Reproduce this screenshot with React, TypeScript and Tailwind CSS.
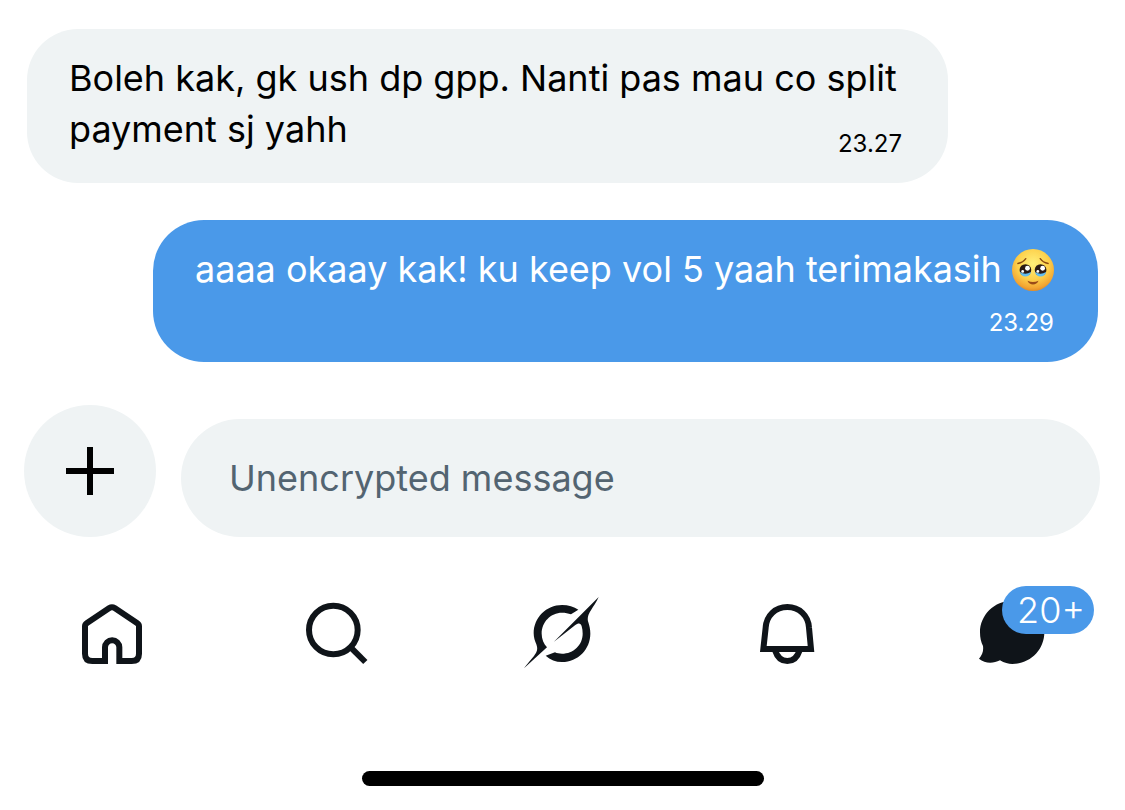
import type { ReactNode } from 'react'


type NavItem = {
  label: string,
  viewBox: string,
  icon: ReactNode,
  badge?: string
}


const navItems: NavItem[] = [
  {
    label: 'Home',
    viewBox: '45 33 225 225',
    icon: <path
      d="M135 228H97Q75 228 75 206V124Q75 118 81 114L148 69Q156 64 164 69L231 114Q237 118 237 124V206Q237 228 215 228H178V187a21.500 21.500 0 0 0-43 0Z"
      fill="none" stroke="currentColor" strokeWidth="18" />
  },
  {
    label: 'Search',
    viewBox: '30 33 225 225',
    icon: <g fill="none" stroke="currentColor" strokeWidth="18">
      <circle cx="130" cy="135" r="73" />
      <path d="M182 187L226 231" />
    </g>
  },
  {
    label: 'Grok',
    viewBox: '45 33 225 225',
    icon: <g fill="currentColor">
      <path d="M205 74C192 65 175 60 156 60C109 60 71 98 71 145C71 158 75 168 79 178C84 192 82 200 72 213C64 223 50 238 42 250L111 187C101 177 95 161 95 146C95 111 122 83 156 83C166 83 175 85 183 88Z" />
      <path d="M107 212C121 225 137 231 156 231C204 231 241 192 241 146C241 133 238 122 235 112C231 98 235 88 242 77C250 64 260 50 266 36L131 171L195 121C205 113 212 113 215 124C217 131 218 138 218 146C218 180 190 206 156 206C148 206 141 205 135 202Z" />
    </g>
  },
  {
    label: 'Notifications',
    viewBox: '30 33 225 225',
    icon: <g fill="none" stroke="currentColor" strokeWidth="18">
      <path d="M70 192L77 128C79 92 106 66 142 66C178 66 205 92 207 128L213 192Z" />
      <path d="M106 198C112 217 125 228 142 228C159 228 172 217 178 198" />
    </g>
  },
  {
    label: 'Messages',
    viewBox: '30 63 225 225',
    badge: '20+',
    icon: <path
      d="M142 77C88 77 45 120 45 172C45 190 48 201 54 213C56 229 52 239 42 251C60 266 84 266 105 256C118 264 130 267 142 267C196 267 238 225 238 172C238 120 196 77 142 77Z"
      fill="currentColor" />
  }
];


function TearyFace() {
  return <svg viewBox="82 42 122 122" role="img" aria-label="face holding back tears"
    className="inline-block size-[42px] align-[-9px]">
    <defs>
      <radialGradient id="face" cx="0.5" cy="0.35" r="0.68">
        <stop offset="0" stopColor="#fff07a" />
        <stop offset="0.55" stopColor="#fdd04b" />
        <stop offset="0.85" stopColor="#f3a532" />
        <stop offset="1" stopColor="#d98224" />
      </radialGradient>
    </defs>
    <circle cx="143" cy="103" r="61" fill="url(#face)" />
    <g fill="none" stroke="#8a4a12" strokeWidth="4" strokeLinecap="round">
      <path d="M99 84Q115 81 122 70" />
      <path d="M187 84Q171 81 164 70" />
    </g>
    <g fill="#2a1a14">
      <circle cx="121" cy="103" r="17" />
      <circle cx="165" cy="103" r="17" />
    </g>
    <g fill="#62bdf0">
      <path d="M105 109Q121 119 137 109Q134 122 121 122Q108 122 105 109Z" />
      <path d="M149 109Q165 119 181 109Q178 122 165 122Q152 122 149 109Z" />
    </g>
    <g fill="#fff">
      <circle cx="127" cy="98" r="7" />
      <circle cx="171" cy="98" r="7" />
      <circle cx="113" cy="107" r="4" />
      <circle cx="157" cy="107" r="4" />
    </g>
    <path d="M127 134Q143 142 159 134Q154 145 143 145Q132 145 127 134Z" fill="#9a4a18" />
  </svg>
}


function App() {

  return <main className="pt-[29px] pb-6 bg-white text-black text-[36px] leading-[51px] font-['Inter',sans-serif]">

    {/* messages */}

    <section className="flex flex-col gap-[37px] px-[27px]">
      <article className="self-start flow-root w-[86%] rounded-[51px] bg-[#eff3f4] pt-6 pb-[27px] pl-[42px] pr-[46px]">
        Boleh kak, gk ush dp gpp. Nanti pas mau co split payment sj yahh
        <time className="float-right mt-7 text-2xl leading-6">23.27</time>
      </article>

      <article className="self-end flex flex-col rounded-[51px] bg-[#4a99e9] text-white pt-6 pb-[27px] pl-[42px] pr-11">
        <p>aaaa okaay kak! ku keep vol 5 yaah terimakasih <TearyFace /></p>
        <time className="self-end mt-4 text-2xl leading-6">23.29</time>
      </article>
    </section>


    {/* composer */}

    <form className="flex items-end gap-[25px] mt-[43px] pl-6 pr-[25px]">
      <button type="button" aria-label="Add attachment"
        className="flex items-center justify-center size-[132px] shrink-0 rounded-full bg-[#eff3f4]">
        <svg viewBox="0 0 48 48" className="size-12">
          <path d="M24 0V48M0 24H48" stroke="currentColor" strokeWidth="6" />
        </svg>
      </button>
      <input type="text" aria-label="Message" placeholder="Unencrypted message"
        className="flex-1 min-w-0 h-[118px] px-12 rounded-full bg-[#eff3f4] placeholder:text-[#536471] outline-none" />
    </form>


    {/* bottom tabs */}

    <nav className="grid grid-cols-5 mt-[59px] text-[#0f1419]">
      {navItems.map(item =>
        <a key={item.label} href="#" aria-label={item.label} className="relative justify-self-center">
          <svg viewBox={item.viewBox} className="block size-[75px] overflow-visible">{item.icon}</svg>
          {item.badge &&
            <span className="absolute left-[27px] -top-2.5 w-[92px] h-12 pl-1.5 rounded-full bg-[#4a99e9] text-white
             text-center leading-[48px] font-light">
              {item.badge}
            </span>}
        </a>
      )}
    </nav>

    <div className="w-[402px] h-[15px] mx-auto mt-[100px] rounded-full bg-black"></div>

  </main>

}


export default App;
